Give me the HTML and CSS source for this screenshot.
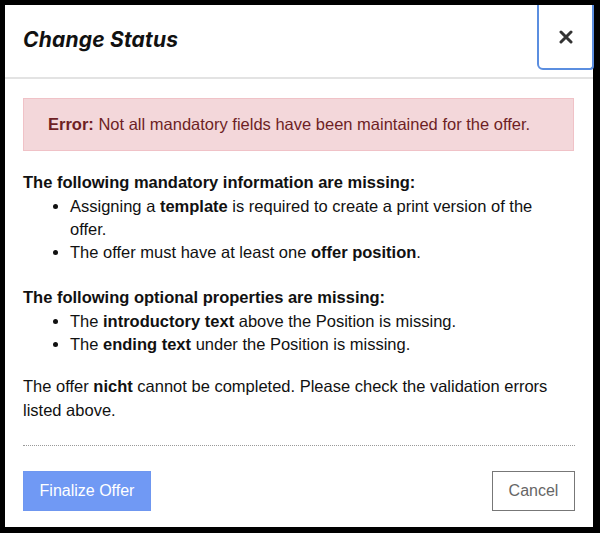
FILE: index.html
```html
<!DOCTYPE html>
<html>
<head>
<meta charset="utf-8">
<link rel="stylesheet" href="styles.css">
</head>
<body>
<div class="modal">
  <div class="modal-header">
    <h1 class="title">Change Status</h1>
    <button class="close" aria-label="Close">
      <svg width="14" height="14" viewBox="0 0 14 14"><path d="M2 2L12 12M12 2L2 12" stroke="#333" stroke-width="3" stroke-linecap="round"/></svg>
    </button>
  </div>
  <div class="modal-body">
    <div class="alert"><b>Error:</b> Not all mandatory fields have been maintained for the offer.</div>
    <div class="section">
      <div class="heading">The following mandatory information are missing:</div>
      <ul>
        <li>Assigning a <b>template</b> is required to create a print version of the offer.</li>
        <li>The offer must have at least one <b>offer position</b>.</li>
      </ul>
    </div>
    <div class="section">
      <div class="heading">The following optional properties are missing:</div>
      <ul>
        <li>The <b>introductory text</b> above the Position is missing.</li>
        <li>The <b>ending text</b> under the Position is missing.</li>
      </ul>
    </div>
    <p class="note">The offer <b>nicht</b> cannot be completed. Please check the validation errors listed above.</p>
  </div>
  <div class="modal-footer">
    <button class="btn primary">Finalize Offer</button>
    <button class="btn secondary">Cancel</button>
  </div>
</div>
</body>
</html>
```
FILE: styles.css
```css
html, body {
  margin: 0;
  padding: 0;
  background: #000;
  width: 600px;
  height: 533px;
  overflow: hidden;
}
body {
  padding: 5px 7px 6px 5px;
  box-sizing: border-box;
  font-family: "Liberation Sans", Arial, sans-serif;
  color: #111;
}
.modal {
  background: #fff;
  height: 522px;
  display: flex;
  flex-direction: column;
}
.modal-header {
  display: flex;
  justify-content: space-between;
  align-items: flex-start;
  height: 72px;
  border-bottom: 2px solid #e3e3e3;
}
.title {
  margin: 0;
  padding: 22px 0 0 18px;
  font-family: "Inter", "DejaVu Sans", sans-serif;
  font-style: italic;
  font-weight: 700;
  font-size: 21px;
  letter-spacing: 0.2px;
  color: #111;
}
.close {
  width: 57px;
  height: 65px;
  margin-right: -1px;
  background: #fff;
  border: 2px solid #5b8ee0;
  border-radius: 0 0 4px 6px;
  border-top: none;
  display: flex;
  align-items: center;
  justify-content: center;
  padding: 0;
}
.modal-body {
  padding: 19px 18px 0 18px;
  font-size: 16.5px;
  line-height: 23.3px;
}
.alert {
  background: #f3d7da;
  border: 1px solid #f0c2c7;
  color: #6e1f25;
  padding: 14px 24px 14px 24px;
  margin-right: 1px;
}
.section {
  margin-top: 20px;
}
.heading {
  font-weight: 700;
}
ul {
  margin: 0;
  padding: 0 32px 0 47px;
}
.section + .section {
  margin-top: 22px;
}
.note {
  margin: 19px 0 0 0;
}
.modal-footer {
  margin: 23px 18px 0 18px;
  border-top: 1px dotted #999;
  padding-top: 25px;
  display: flex;
  justify-content: space-between;
}
.btn {
  font-family: "Liberation Sans", Arial, sans-serif;
  font-size: 16px;
  height: 40px;
  padding: 0 15px;
}
.primary {
  background: #7099f4;
  color: #fff;
  border: 1px solid #6f97f0;
  width: 128px;
}
.secondary {
  background: #fff;
  color: #666;
  border: 1px solid #777;
  width: 83px;
}
```
